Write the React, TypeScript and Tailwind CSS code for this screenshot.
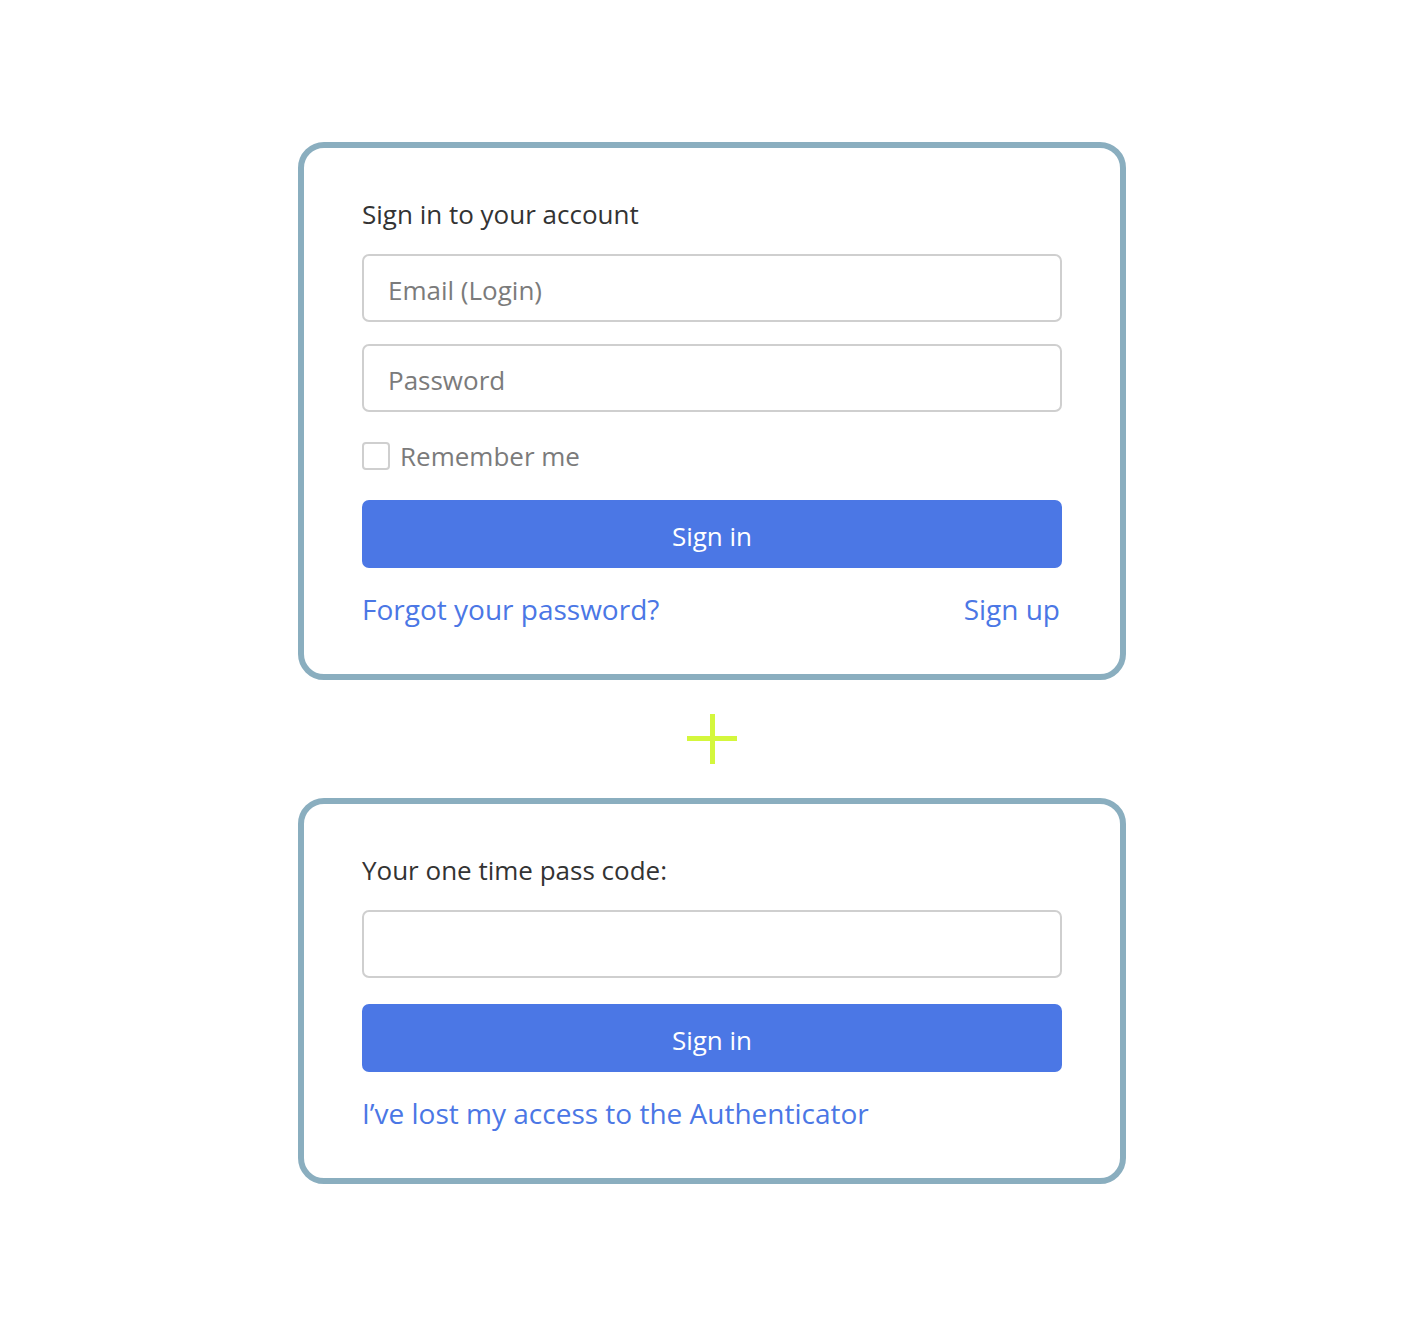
import React from 'react';

const font = { fontFamily: '"Open Sans", "Noto Sans", sans-serif' };

const Field = ({ placeholder }: { placeholder?: string }) => (
  <input
    type="text"
    placeholder={placeholder}
    className="block w-full h-[68px] rounded-[7px] border-2 border-[#cfcfcf] bg-white pl-[24px] pt-[4px] text-[26px] text-[#333] placeholder:text-[#7b7b7b] outline-none"
  />
);

const SubmitButton = () => (
  <button className="block w-full h-[68px] rounded-[7px] bg-[#4b77e5] pt-[4px] text-[26px] text-white">
    Sign in
  </button>
);

export default function App() {
  return (
    <div className="min-h-[1326px] w-full bg-white flex flex-col items-center pt-[142px]" style={font}>
      <div className="w-[828px] rounded-[26px] border-[6px] border-[#8aaebf] px-[58px] pt-[48px] pb-[47px]">
        <h2 className="text-[26px] leading-[36px] text-[#333]">Sign in to your account</h2>
        <div className="mt-[22px]">
          <Field placeholder="Email (Login)" />
        </div>
        <div className="mt-[22px]">
          <Field placeholder="Password" />
        </div>
        <label className="mt-[30px] flex items-center gap-[10px] h-[28px]">
          <span className="w-[28px] h-[28px] rounded-[4px] border-2 border-[#cfcfcf] bg-white" />
          <span className="text-[26px] text-[#7b7b7b]">Remember me</span>
        </label>
        <div className="mt-[30px]">
          <SubmitButton />
        </div>
        <div className="mt-[23px] flex justify-between pr-[2px] text-[28px] leading-[36px] text-[#4b77e5]">
          <a href="#">Forgot your password?</a>
          <a href="#">Sign up</a>
        </div>
      </div>

      <div className="my-[34px] relative w-[50px] h-[50px]">
        <div className="absolute left-0 top-[22px] w-[50px] h-[5px] bg-[#d4f73c]" />
        <div className="absolute top-0 left-[23px] h-[50px] w-[5px] bg-[#d4f73c]" />
      </div>

      <div className="w-[828px] rounded-[26px] border-[6px] border-[#8aaebf] px-[58px] pt-[48px] pb-[47px]">
        <h2 className="text-[26px] leading-[36px] text-[#333]">Your one time pass code:</h2>
        <div className="mt-[22px]">
          <Field />
        </div>
        <div className="mt-[26px]">
          <SubmitButton />
        </div>
        <div className="mt-[23px] text-[28px] leading-[36px] text-[#4b77e5]">
          <a href="#">I’ve lost my access to the Authenticator</a>
        </div>
      </div>
    </div>
  );
}
